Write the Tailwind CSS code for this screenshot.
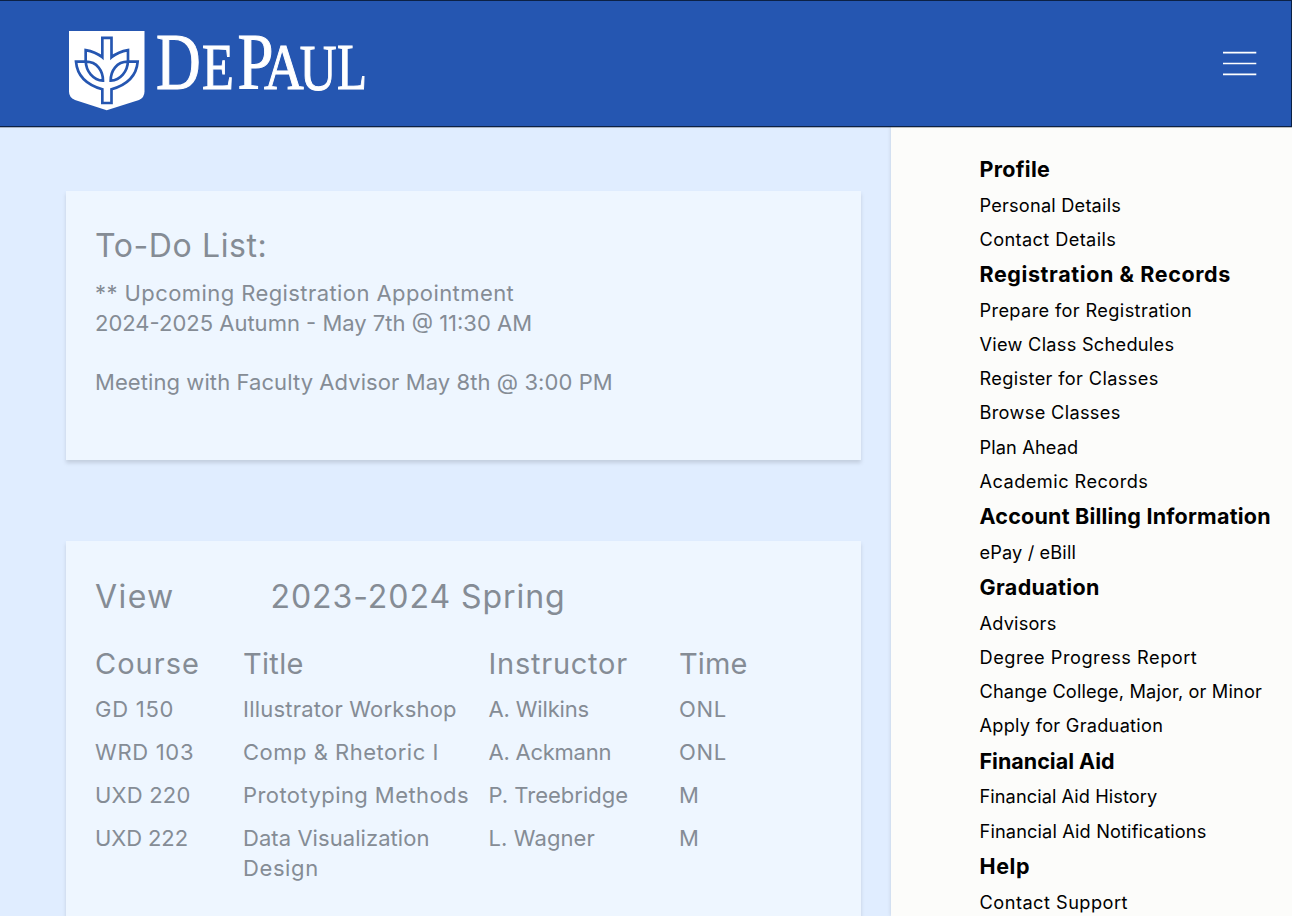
<!DOCTYPE html>
<html lang="en">
<head>
<meta charset="utf-8">
<title>DePaul</title>
<script src="https://cdn.jsdelivr.net/npm/@tailwindcss/browser@4"></script>
</head>
<body class="h-[916px] w-[1292px] overflow-hidden bg-[#e0edff] font-[Inter,sans-serif]">
<header class="relative z-10 flex h-[127px] items-start justify-between border border-l-0 border-[#0c2145] bg-[#2556b1] shadow-[0_1px_0_rgba(0,0,0,0.25)]">
  <svg class="ml-[60px] mt-[19px] h-[100px] w-[320px]" viewBox="60 20 320 100" role="img" aria-label="DePaul">
    <path fill="#fff" d="M69 31H144.500V91.500Q144.500 97.500 139 100L106.700 110.300L75 100Q69 97.500 69 91.500Z"/>
    <g transform="translate(60 20) scale(.33333)" fill="none" stroke="#2556b1" stroke-width="8" stroke-linejoin="miter">
      <path d="M127 112V53.500H154.500V112Q175 95 204 90.500V125H233Q228 187 154.500 208V249H127V208Q53 187 48 125H77V90.500Q106 95 127 112Z"/>
      <path d="M77 122C78 155 100 180 129 182C129 153 112 125 77 125"/>
      <path d="M204 122C203 155 181 180 152 182C152 153 169 125 204 125"/>
    </g>
    <g fill="#fff" stroke="#fff" stroke-width="1.100" font-family="Liberation Serif, serif">
      <text x="156" y="89" font-size="80" textLength="44.700" lengthAdjust="spacingAndGlyphs">D</text>
      <text x="201.900" y="89" font-size="65" textLength="31.900" lengthAdjust="spacingAndGlyphs">E</text>
      <text x="237.500" y="89" font-size="80" textLength="36" lengthAdjust="spacingAndGlyphs">P</text>
      <text x="264" y="89" font-size="66" textLength="39.700" lengthAdjust="spacingAndGlyphs">A</text>
      <text x="299.800" y="90" font-size="66" textLength="36.800" lengthAdjust="spacingAndGlyphs">U</text>
      <text x="337" y="89" font-size="65" textLength="30" lengthAdjust="spacingAndGlyphs">L</text>
    </g>
  </svg>
  <svg class="mr-[34px] mt-[50px] h-[26px] w-[35px]" viewBox="0 0 35 26" stroke="#fff" stroke-width="1.700"><path d="M1 1.700H34.300M1 12.500H34.300M1 23.300H34.300"/></svg>
</header>
<div class="flex h-[789px] overflow-hidden">
  <main class="flex w-[890.5px] shrink-0 flex-col gap-[81px] pl-[66px] pt-[64px] text-[22px] leading-[29.7px] text-[#858c95]">
    <section class="h-[269px] w-[795px] shrink-0 bg-[#eef6ff] pl-[29px] pt-[35px] shadow-[0_3px_4px_rgba(0,0,0,0.13)]">
      <h1 class="h-[53px] text-[32px] leading-[40px] tracking-[0.6px]">To-Do List:</h1>
      <p class="tracking-[0.42px]">** Upcoming Registration Appointment</p>
      <p>2024-2025 Autumn - May 7th @ 11:30 AM</p>
      <p class="mt-[29.7px] tracking-[0.08px]">Meeting with Faculty Advisor May 8th @ 3:00 PM</p>
    </section>
    <section class="h-[450px] w-[795px] shrink-0 bg-[#eef6ff] pl-[29px] pt-[36px] shadow-[0_3px_4px_rgba(0,0,0,0.13)]">
      <div class="flex text-[32px] leading-[40px]">
        <h2 class="w-[175.5px] tracking-[1.4px]">View</h2>
        <p class="tracking-[0.95px]">2023-2024 Spring</p>
      </div>
      <div class="mt-[26.5px] grid grid-cols-[148px_245.5px_190.5px_auto] gap-y-[13.5px] whitespace-nowrap">
        <div class="-mb-[2.5px] text-[29px] leading-[40px] tracking-[1px]">Course</div>
        <div class="-mb-[2.5px] text-[29px] leading-[40px] tracking-[0.3px]">Title</div>
        <div class="-mb-[2.5px] text-[29px] leading-[40px] tracking-[0.75px]">Instructor</div>
        <div class="-mb-[2.5px] text-[29px] leading-[40px] tracking-[0.15px]">Time</div>
        <div class="tracking-[0.75px]">GD 150</div><div class="tracking-[0.22px]">Illustrator Workshop</div><div class="tracking-[-0.15px]">A. Wilkins</div><div class="tracking-[0.7px]">ONL</div>
        <div class="tracking-[0.7px]">WRD 103</div><div class="tracking-[0.5px]">Comp &amp; Rhetoric I</div><div class="tracking-[-0.25px]">A. Ackmann</div><div class="tracking-[0.7px]">ONL</div>
        <div class="tracking-[0.2px]">UXD 220</div><div class="tracking-[0.42px]">Prototyping Methods</div><div>P. Treebridge</div><div>M</div>
        <div class="tracking-[-0.1px]">UXD 222</div><div><p class="tracking-[0.06px]">Data Visualization</p><p class="tracking-[0.6px]">Design</p></div><div class="tracking-[0.1px]">L. Wagner</div><div>M</div>
      </div>
    </section>
  </main>
  <nav class="flex-1 whitespace-nowrap bg-[#fcfcfa] pl-[89px] pt-[23.9px] text-[18.2px] leading-[34.15px] text-black shadow-[0_0_4px_rgba(0,0,0,0.14)] [&>h3]:pt-px [&>h3]:text-[21.5px] [&>h3]:font-bold [&>h3]:leading-[35.9px]">
    <h3 class="tracking-[0.3px]">Profile</h3>
    <p class="tracking-[0.2px]">Personal Details</p>
    <p class="tracking-[0.38px]">Contact Details</p>
    <h3 class="tracking-[0.6px]">Registration &amp; Records</h3>
    <p class="tracking-[0.37px]">Prepare for Registration</p>
    <p class="tracking-[0.27px]">View Class Schedules</p>
    <p class="tracking-[0.36px]">Register for Classes</p>
    <p class="tracking-[0.33px]">Browse Classes</p>
    <p class="tracking-[0.13px]">Plan Ahead</p>
    <p class="tracking-[0.46px]">Academic Records</p>
    <h3 class="tracking-[0.22px]">Account Billing Information</h3>
    <p class="tracking-[0.13px]">ePay / eBill</p>
    <h3 class="tracking-[0.35px]">Graduation</h3>
    <p class="tracking-[0.2px]">Advisors</p>
    <p class="tracking-[0.51px]">Degree Progress Report</p>
    <p class="tracking-[0.15px]">Change College, Major, or Minor</p>
    <p class="tracking-[0.26px]">Apply for Graduation</p>
    <h3>Financial Aid</h3>
    <p class="tracking-[0.07px]">Financial Aid History</p>
    <p class="tracking-[0.14px]">Financial Aid Notifications</p>
    <h3 class="tracking-[0.6px]">Help</h3>
    <p class="tracking-[0.48px]">Contact Support</p>
  </nav>
</div>
</body>
</html>
